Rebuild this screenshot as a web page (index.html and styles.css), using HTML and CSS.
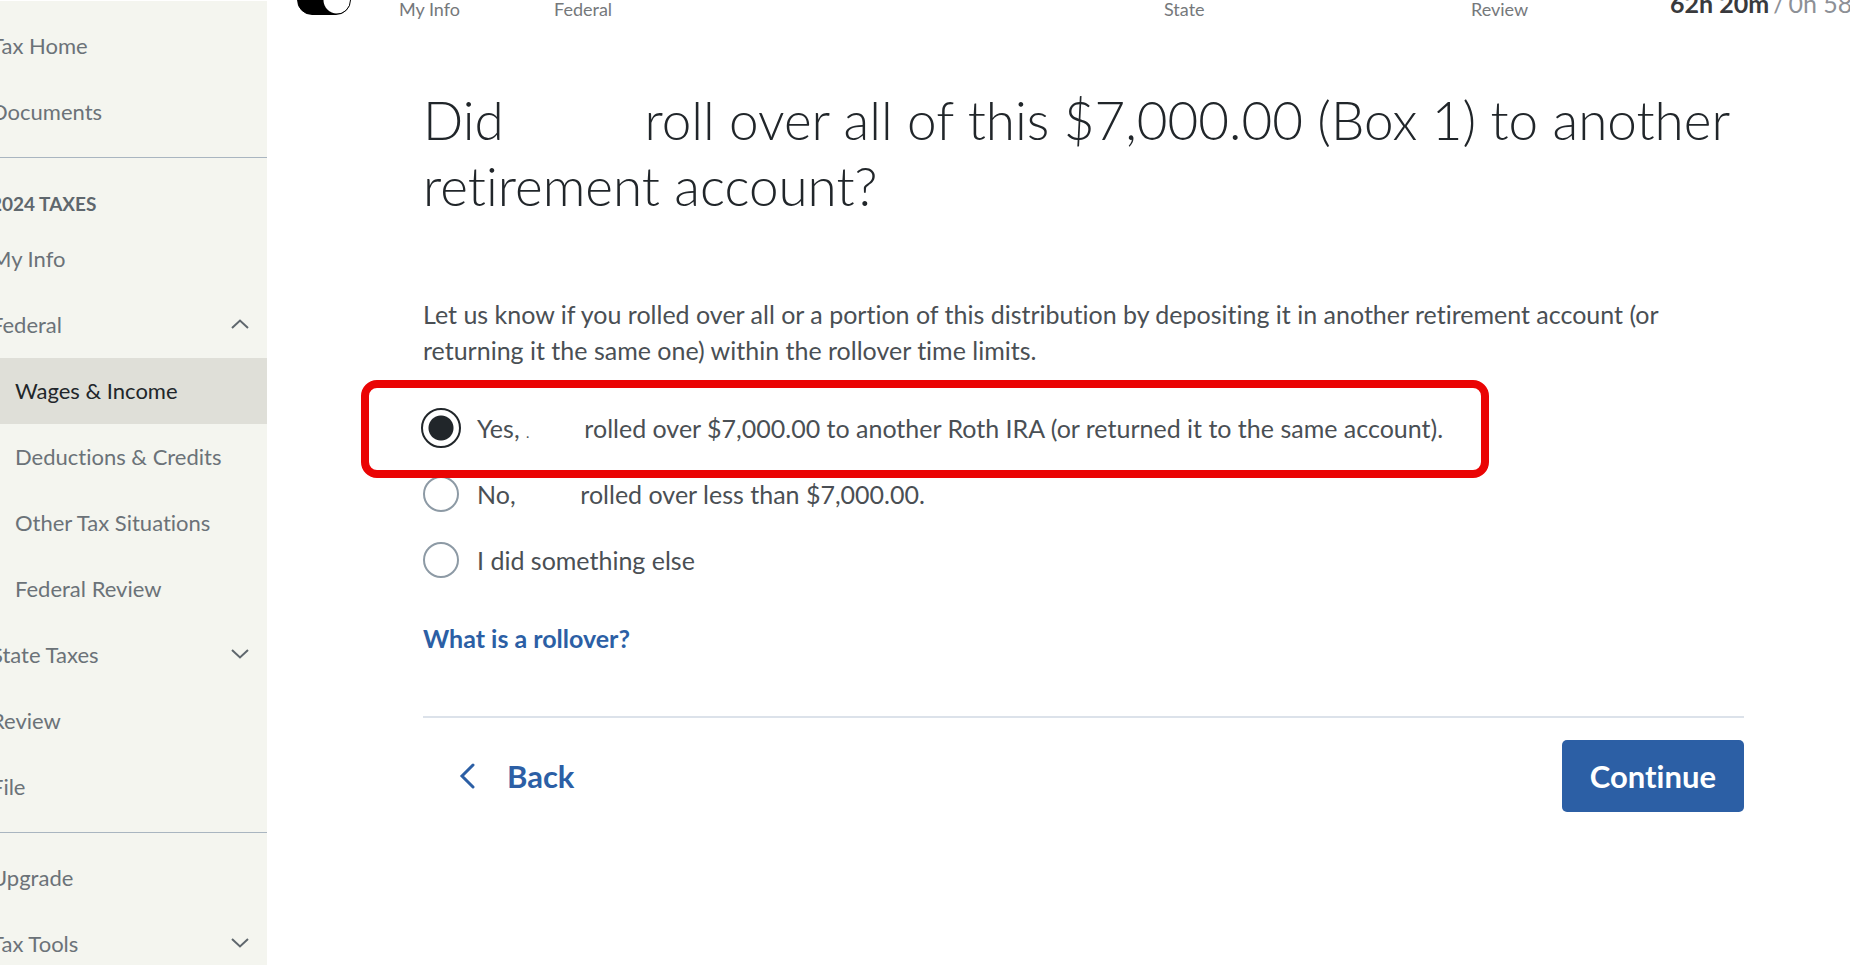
FILE: index.html
```html
<!DOCTYPE html>
<html lang="en">
<head>
  <meta charset="utf-8">
  <title>Retirement Rollover</title>
  <link rel="stylesheet" href="styles.css">
</head>
<body>
  <nav class="sidebar">
    <ul class="nav-list">
      <li><a class="nav-link" href="#">Tax Home</a></li>
      <li><a class="nav-link" href="#">Documents</a></li>
    </ul>
    <hr class="nav-line">
    <h2 class="nav-title">2024 TAXES</h2>
    <ul class="nav-list">
      <li><a class="nav-link" href="#">My Info</a></li>
      <li>
        <a class="nav-link" href="#">Federal
          <svg class="chevron" viewBox="0 0 18 10"><path d="M1 9 L9 1.5 L17 9"/></svg>
        </a>
        <ul class="nav-list">
          <li><a class="nav-link sub active" href="#">Wages &amp; Income</a></li>
          <li><a class="nav-link sub" href="#">Deductions &amp; Credits</a></li>
          <li><a class="nav-link sub" href="#">Other Tax Situations</a></li>
          <li><a class="nav-link sub" href="#">Federal Review</a></li>
        </ul>
      </li>
      <li>
        <a class="nav-link" href="#">State Taxes
          <svg class="chevron" viewBox="0 0 18 10"><path d="M1 1 L9 8.5 L17 1"/></svg>
        </a>
      </li>
      <li><a class="nav-link" href="#">Review</a></li>
      <li><a class="nav-link" href="#">File</a></li>
    </ul>
    <hr class="nav-line">
    <ul class="nav-list">
      <li><a class="nav-link" href="#">Upgrade</a></li>
      <li>
        <a class="nav-link" href="#">Tax Tools
          <svg class="chevron" viewBox="0 0 18 10"><path d="M1 1 L9 8.5 L17 1"/></svg>
        </a>
      </li>
    </ul>
  </nav>

  <div class="page">
    <header class="topbar">
      <input class="toggle" type="checkbox" aria-label="Timer" checked>
      <div class="steps">
        <span>My Info</span>
        <span>Federal</span>
        <span>State</span>
        <span>Review</span>
      </div>
      <div class="timer"><b>62h 20m</b><span>/</span><span>0h 58</span></div>
    </header>

    <main class="content">
      <h1>Did <span class="name"></span> roll over all of this $7,000.00 (Box 1) to another retirement account?</h1>
      <p>Let us know if you rolled over all or a portion of this distribution by depositing it in another retirement account (or returning it the same one) within the rollover time limits.</p>

      <form>
        <div class="option picked">
          <input type="radio" name="rollover" id="yes" checked>
          <label for="yes">Yes, <span class="name">.</span> rolled over $7,000.00 to another Roth IRA (or returned it to the same account).</label>
        </div>
        <div class="option">
          <input type="radio" name="rollover" id="no">
          <label for="no">No, <span class="name"></span> rolled over less than $7,000.00.</label>
        </div>
        <div class="option">
          <input type="radio" name="rollover" id="other">
          <label for="other">I did something else</label>
        </div>

        <a class="help" href="#">What is a rollover?</a>

        <div class="actions">
          <button type="button" class="back">
            <svg viewBox="0 0 16 26"><path d="M14 2 L3 13 L14 24"/></svg>
            Back
          </button>
          <button type="submit" class="continue">Continue</button>
        </div>
      </form>
    </main>
  </div>
</body>
</html>
```
FILE: styles.css
```css
* {
  box-sizing: border-box;
}
body {
  margin: 0;
  display: flex;
  height: 100vh;
  overflow: hidden;
  font-family: Lato, "Open Sans", sans-serif;
  font-variant-ligatures: none;
  color: #21262a;
  background: #fff;
}

/* sidebar */
.sidebar {
  flex: 0 0 267px;
  margin-top: 1px;
  padding-top: 12px;
  overflow: hidden;
  background: #f4f5ef;
}
.nav-list {
  margin: 0;
  padding: 0;
  list-style: none;
}
.nav-link {
  display: flex;
  align-items: center;
  justify-content: space-between;
  height: 66px;
  padding: 0 18px 2px 0;
  font-size: 22px;
  text-indent: -9px;
  color: #6b7278;
  text-decoration: none;
}
.nav-link.sub {
  text-indent: 15px;
}
.nav-link.active {
  background: #dfdfd8;
  color: #21262a;
}
.nav-line {
  margin: 12px 0;
  border: 0;
  border-top: 1px solid #a9b5c0;
}
.nav-title {
  margin: 34px 0 10px;
  font-size: 19px;
  line-height: 24px;
  text-indent: -9px;
  color: #5f676d;
}
.chevron {
  width: 18px;
  height: 10px;
  fill: none;
  stroke: #5f676d;
  stroke-width: 2;
}

/* top bar */
.page {
  flex: 1;
  min-width: 0;
}
.topbar {
  display: flex;
  align-items: center;
  height: 20px;
  padding-left: 30px;
  white-space: nowrap;
}
.toggle {
  appearance: none;
  flex: none;
  align-self: flex-end;
  width: 54px;
  height: 30px;
  margin: 0 48px 5px 0;
  border: 1px solid #000;
  border-radius: 15px;
  background: radial-gradient(circle at 39px 50%, #fff 13px, #000 14px);
}
.steps {
  flex: 1;
  display: grid;
  grid-template-columns: 155fr 610fr 307fr 199fr;
  padding-bottom: 2px;
  font-size: 18px;
  color: #75787b;
}
.timer {
  flex: 0 0 180px;
  min-width: 0;
  display: flex;
  gap: 4px;
  padding-bottom: 14px;
  font-size: 25px;
  color: #8d9096;
}
.timer b {
  color: #393a3d;
}

/* question */
.content {
  padding: 67px 106px 0 156px;
}
h1 {
  margin: 0 0 77px;
  font-size: 53px;
  font-weight: 300;
  line-height: 66px;
}
.name {
  display: inline-block;
}
h1 .name {
  width: 112px;
}
p {
  margin: 0;
  font-size: 25px;
  line-height: 36px;
  color: #4a4f54;
}
form {
  padding-top: 27px;
}
.option {
  position: relative;
  display: flex;
  align-items: center;
  gap: 18px;
  height: 66px;
  padding-left: 18px;
  font-size: 25px;
  color: #4a4f54;
}
.option .name {
  width: 52px;
  font-size: 14px;
}
.option input {
  appearance: none;
  flex: none;
  width: 36px;
  height: 36px;
  margin: 0 0 0 -18px;
  border: 2px solid #8d9aa5;
  border-radius: 50%;
}
.option input:checked {
  width: 40px;
  height: 40px;
  margin: 0 -2px 0 -20px;
  border-color: #21262a;
  background: radial-gradient(circle, #21262a 12px, #fff 13px);
}
.picked::after {
  content: "";
  position: absolute;
  z-index: 1;
  inset: -15px 255px -17px -62px;
  border: 8px solid #ea0404;
  border-radius: 16px;
  pointer-events: none;
}
.help {
  display: inline-block;
  margin-top: 27px;
  font-size: 25px;
  font-weight: 700;
  line-height: 36px;
  color: #2c5fa5;
  text-decoration: none;
}
.actions {
  display: flex;
  align-items: center;
  justify-content: space-between;
  margin-top: 60px;
  padding-top: 22px;
  border-top: 2px solid #dce2ea;
}
button {
  height: 72px;
  border: 0;
  border-radius: 5px;
  font-family: inherit;
  font-size: 31px;
  font-weight: 700;
  font-variant-ligatures: none;
}
.back {
  display: flex;
  align-items: center;
  gap: 32px;
  padding: 0 36px;
  background: none;
  color: #2c5fa5;
}
.back svg {
  width: 16px;
  height: 26px;
  fill: none;
  stroke: #2c5fa5;
  stroke-width: 3;
  stroke-linecap: round;
}
.continue {
  padding: 0 28px;
  background: #2c5fa5;
  color: #fff;
}
```
